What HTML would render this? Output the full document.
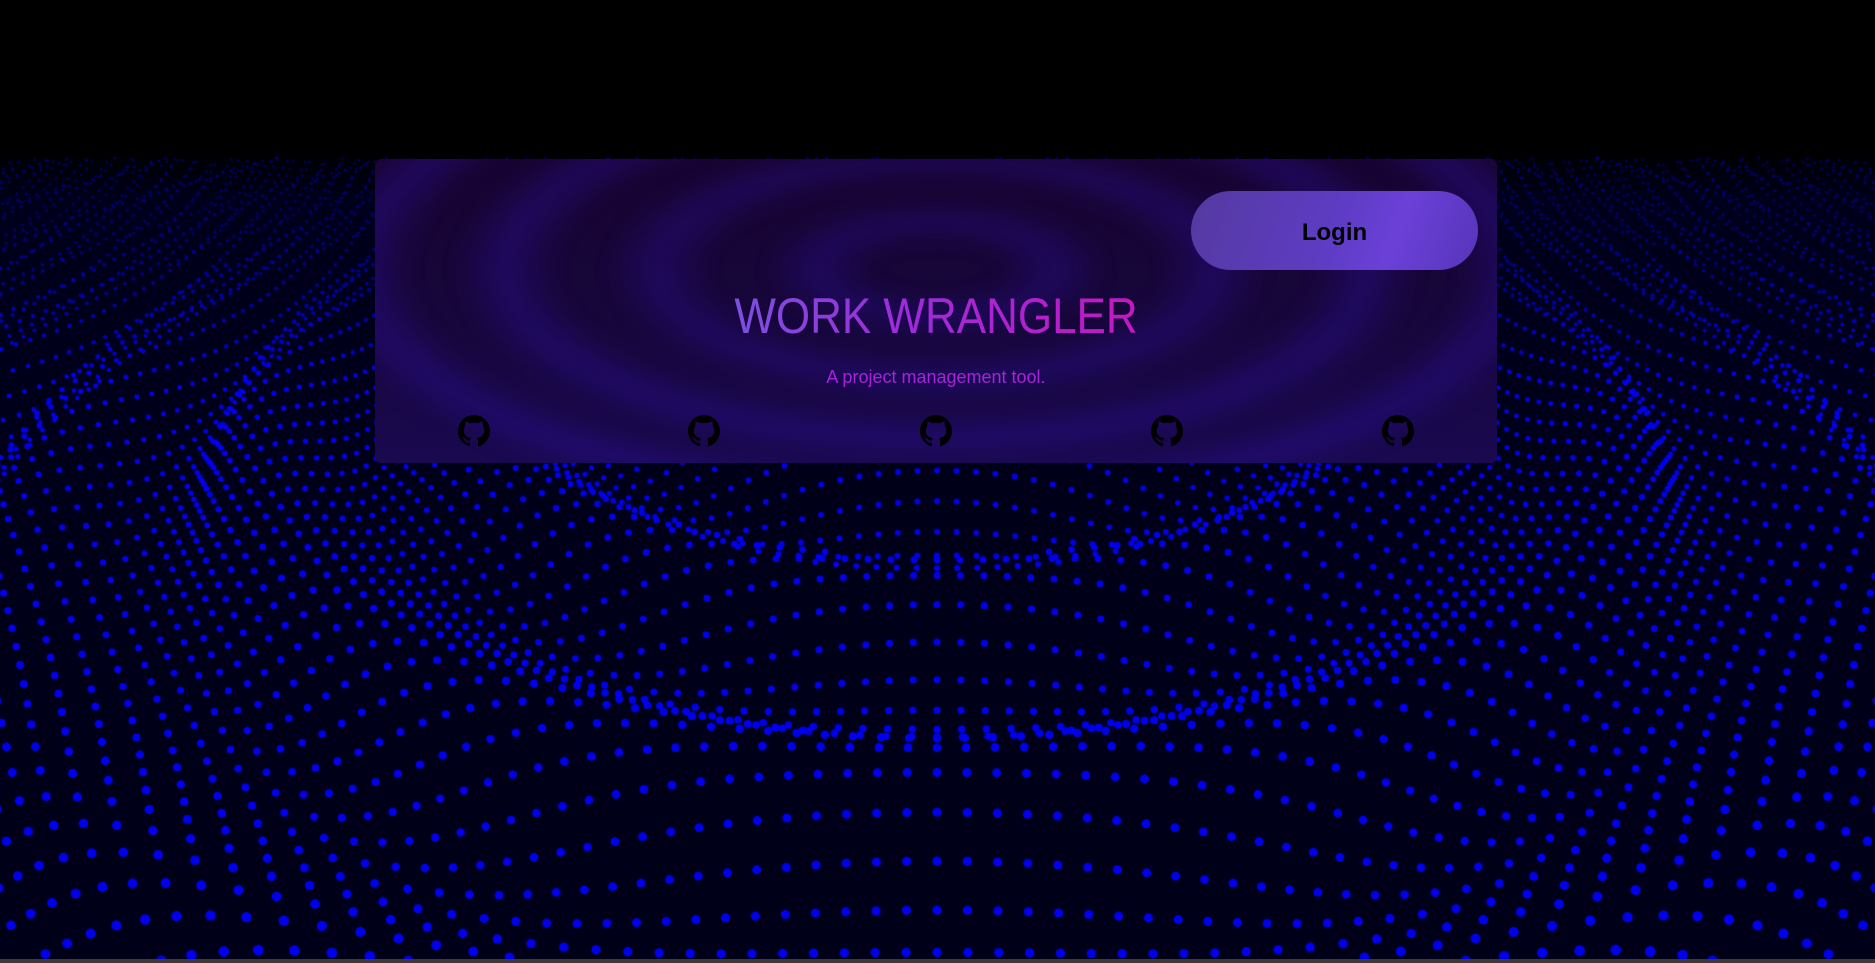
<!DOCTYPE html>
<html><head><meta charset="utf-8"><style>
html,body{margin:0;padding:0;width:1875px;height:963px;overflow:hidden;background:#000;}
#bg{position:absolute;left:0;top:0;width:1875px;height:963px;
 background:linear-gradient(#000 0,#000 150px,#00001a 200px,#000018 963px);}
canvas{position:absolute;left:0;top:0}
.strip{position:absolute;left:0;top:959px;width:1875px;height:4px;background:#3a3a3a}
.card{position:absolute;left:375px;top:159px;width:1122px;height:304px;border-radius:6px;overflow:hidden;
 background:linear-gradient(#180432 0,#17063a 50%,#1a0950 100%);}
.rip{position:absolute;left:-100px;top:-150px;width:1322px;height:520px;filter:blur(9px);
 background:radial-gradient(ellipse 661px 260px at 661px 260px, rgba(40,10,120,0) 0, rgba(40,10,120,0) 10%, rgba(45,15,160,.35) 18%, rgba(40,10,120,0) 26%, rgba(40,10,120,0) 34%, rgba(45,15,160,.35) 42%, rgba(40,10,120,0) 50%, rgba(40,10,120,0) 57%, rgba(45,15,160,.38) 65%, rgba(40,10,120,0) 73%, rgba(40,10,120,0) 79%, rgba(45,15,160,.4) 87%, rgba(40,10,120,0) 95%);}
.login{position:absolute;left:816px;top:32px;width:287px;height:79px;border-radius:40px;
 background:linear-gradient(110deg,#553aa0 0%,#5e3cc4 50%,#6b40d8 70%,#5635b8 100%);
 font:bold 24px "Liberation Sans",sans-serif;color:#000;text-align:center;line-height:83px}
.title{position:absolute;left:0;width:1122px;top:128px;text-align:center;font:50px "Liberation Sans",sans-serif;transform:scaleX(0.88);}
.title span{background:linear-gradient(90deg,#7a50e0 0%,#a02ad8 45%,#c418c4 100%);-webkit-background-clip:text;background-clip:text;color:transparent}
.sub{position:absolute;left:0;width:1122px;top:208px;text-align:center;font:18px "Liberation Sans",sans-serif;color:#a524d4}
.gh{position:absolute;top:256px;width:32px;height:32px}
</style></head><body>
<div id="bg"></div>
<canvas id="c" width="1875" height="963"></canvas>
<div class="strip"></div>
<div class="card">
 <div class="rip"></div>
 <div class="login">Login</div>
 <div class="title"><span>WORK WRANGLER</span></div>
 <div class="sub">A project management tool.</div>
 <svg class="gh" style="left:83px" viewBox="0 0 16 16"><path fill="#000" d="M8 0C3.58 0 0 3.58 0 8c0 3.54 2.29 6.53 5.47 7.59.4.07.55-.17.55-.38 0-.19-.01-.82-.01-1.49-2.01.37-2.53-.49-2.69-.94-.09-.23-.48-.94-.82-1.13-.28-.15-.68-.52-.01-.53.63-.01 1.08.58 1.23.82.72 1.21 1.87.87 2.33.66.07-.52.28-.87.51-1.07-1.78-.2-3.64-.89-3.64-3.95 0-.87.31-1.59.82-2.15-.08-.2-.36-1.02.08-2.12 0 0 .67-.21 2.2.82.64-.18 1.32-.27 2-.27.68 0 1.36.09 2 .27 1.53-1.04 2.2-.82 2.2-.82.44 1.1.16 1.92.08 2.12.51.56.82 1.27.82 2.15 0 3.07-1.87 3.75-3.65 3.95.29.25.54.73.54 1.48 0 1.07-.01 1.93-.01 2.2 0 .21.15.46.55.38A8.013 8.013 0 0016 8c0-4.42-3.58-8-8-8z"/></svg>
 <svg class="gh" style="left:313px" viewBox="0 0 16 16"><path fill="#000" d="M8 0C3.58 0 0 3.58 0 8c0 3.54 2.29 6.53 5.47 7.59.4.07.55-.17.55-.38 0-.19-.01-.82-.01-1.49-2.01.37-2.53-.49-2.69-.94-.09-.23-.48-.94-.82-1.13-.28-.15-.68-.52-.01-.53.63-.01 1.08.58 1.23.82.72 1.21 1.87.87 2.33.66.07-.52.28-.87.51-1.07-1.78-.2-3.64-.89-3.64-3.95 0-.87.31-1.59.82-2.15-.08-.2-.36-1.02.08-2.12 0 0 .67-.21 2.2.82.64-.18 1.32-.27 2-.27.68 0 1.36.09 2 .27 1.53-1.04 2.2-.82 2.2-.82.44 1.1.16 1.92.08 2.12.51.56.82 1.27.82 2.15 0 3.07-1.87 3.75-3.65 3.95.29.25.54.73.54 1.48 0 1.07-.01 1.93-.01 2.2 0 .21.15.46.55.38A8.013 8.013 0 0016 8c0-4.42-3.58-8-8-8z"/></svg>
 <svg class="gh" style="left:545px" viewBox="0 0 16 16"><path fill="#000" d="M8 0C3.58 0 0 3.58 0 8c0 3.54 2.29 6.53 5.47 7.59.4.07.55-.17.55-.38 0-.19-.01-.82-.01-1.49-2.01.37-2.53-.49-2.69-.94-.09-.23-.48-.94-.82-1.13-.28-.15-.68-.52-.01-.53.63-.01 1.08.58 1.23.82.72 1.21 1.87.87 2.33.66.07-.52.28-.87.51-1.07-1.78-.2-3.64-.89-3.64-3.95 0-.87.31-1.59.82-2.15-.08-.2-.36-1.02.08-2.12 0 0 .67-.21 2.2.82.64-.18 1.32-.27 2-.27.68 0 1.36.09 2 .27 1.53-1.04 2.2-.82 2.2-.82.44 1.1.16 1.92.08 2.12.51.56.82 1.27.82 2.15 0 3.07-1.87 3.75-3.65 3.95.29.25.54.73.54 1.48 0 1.07-.01 1.93-.01 2.2 0 .21.15.46.55.38A8.013 8.013 0 0016 8c0-4.42-3.58-8-8-8z"/></svg>
 <svg class="gh" style="left:776px" viewBox="0 0 16 16"><path fill="#000" d="M8 0C3.58 0 0 3.58 0 8c0 3.54 2.29 6.53 5.47 7.59.4.07.55-.17.55-.38 0-.19-.01-.82-.01-1.49-2.01.37-2.53-.49-2.69-.94-.09-.23-.48-.94-.82-1.13-.28-.15-.68-.52-.01-.53.63-.01 1.08.58 1.23.82.72 1.21 1.87.87 2.33.66.07-.52.28-.87.51-1.07-1.78-.2-3.64-.89-3.64-3.95 0-.87.31-1.59.82-2.15-.08-.2-.36-1.02.08-2.12 0 0 .67-.21 2.2.82.64-.18 1.32-.27 2-.27.68 0 1.36.09 2 .27 1.53-1.04 2.2-.82 2.2-.82.44 1.1.16 1.92.08 2.12.51.56.82 1.27.82 2.15 0 3.07-1.87 3.75-3.65 3.95.29.25.54.73.54 1.48 0 1.07-.01 1.93-.01 2.2 0 .21.15.46.55.38A8.013 8.013 0 0016 8c0-4.42-3.58-8-8-8z"/></svg>
 <svg class="gh" style="left:1007px" viewBox="0 0 16 16"><path fill="#000" d="M8 0C3.58 0 0 3.58 0 8c0 3.54 2.29 6.53 5.47 7.59.4.07.55-.17.55-.38 0-.19-.01-.82-.01-1.49-2.01.37-2.53-.49-2.69-.94-.09-.23-.48-.94-.82-1.13-.28-.15-.68-.52-.01-.53.63-.01 1.08.58 1.23.82.72 1.21 1.87.87 2.33.66.07-.52.28-.87.51-1.07-1.78-.2-3.64-.89-3.64-3.95 0-.87.31-1.59.82-2.15-.08-.2-.36-1.02.08-2.12 0 0 .67-.21 2.2.82.64-.18 1.32-.27 2-.27.68 0 1.36.09 2 .27 1.53-1.04 2.2-.82 2.2-.82.44 1.1.16 1.92.08 2.12.51.56.82 1.27.82 2.15 0 3.07-1.87 3.75-3.65 3.95.29.25.54.73.54 1.48 0 1.07-.01 1.93-.01 2.2 0 .21.15.46.55.38A8.013 8.013 0 0016 8c0-4.42-3.58-8-8-8z"/></svg>
</div>
<script>
var c=document.getElementById('c').getContext('2d');
var cx=937,cy=480,f=900,H=600,th=35*Math.PI/180,sn=Math.sin(th),cs=Math.cos(th);
var A=45,K=35,Zc=1366,S=22;
for(var Z=2400;Z>=250;Z-=S){
 for(var xi=-130;xi<=130;xi++){
  var X=xi*S, dz=Z-Zc;
  var r=Math.sqrt(X*X+dz*dz)+0.001;
  var h=A*Math.sin(r/K);
  var dy=h-H;
  var depth=-dy*sn+Z*cs, up=dy*cs+Z*sn;
  var sx=cx+f*X/depth, sy=cy-f*up/depth;
  if(sx<-8||sx>1883||sy>962||sy<158)continue;
  var g=(A/K)*Math.cos(r/K);
  var hx=g*X/r, hz=g*dz/r;
  var d=X*hx+(H-h)+Z*hz;
  if(d<0)continue;
  var rad=Math.max(1.2,5*594/depth);
  var a=Math.min(1,Math.max(0.25,(sy-158)/220));
  c.fillStyle='rgba(0,0,'+Math.round(150+88*a)+','+(0.4+0.6*a)+')';
  c.beginPath();c.arc(sx,sy,rad,0,Math.PI*2);c.fill();
 }
}
</script>
</body></html>
